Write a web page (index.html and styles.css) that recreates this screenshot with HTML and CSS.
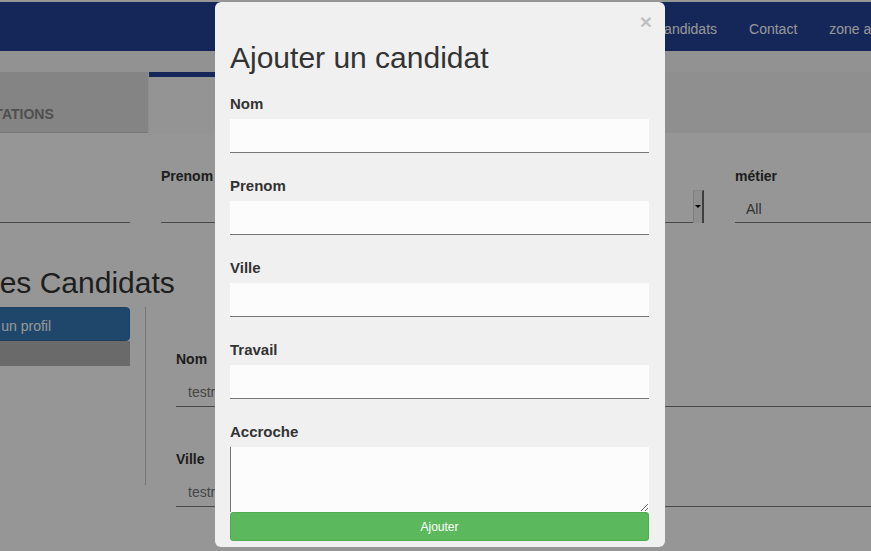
FILE: index.html
```html
<!DOCTYPE html>
<html lang="fr">
<head>
<meta charset="utf-8">
<title>Candidats</title>
<link rel="stylesheet" href="styles.css">
</head>
<body>
<div class="page">
  <nav class="navbar">
    <ul class="nav-links">
      <li><a href="#">Candidats</a></li>
      <li><a href="#">Contact</a></li>
      <li><a href="#">zone admin</a></li>
    </ul>
  </nav>
  <div class="subnav"></div>
  <div class="tabs">
    <div class="tab tab-inactive">PRESTATIONS</div>
    <div class="tab tab-active">CANDIDATS</div>
  </div>
  <main class="main">
    <div class="filters">
      <div class="filter">
        <label class="field-label">Nom</label>
        <input class="field-input" type="text">
      </div>
      <div class="filter">
        <label class="field-label">Prenom</label>
        <input class="field-input" type="text">
      </div>
      <div class="filter">
        <label class="field-label">Ville</label>
        <div class="select-wrap">
          <select class="field-select"><option></option></select>
          <span class="select-arrow"><span class="caret"></span></span>
        </div>
      </div>
      <div class="filter">
        <label class="field-label">métier</label>
        <select class="field-select field-select-full"><option>All</option></select>
      </div>
    </div>
    <h2 class="page-title">Les Candidats</h2>
    <div class="content">
      <aside class="sidebar">
        <button class="btn-primary" type="button">Ajouter un profil</button>
        <div class="sidebar-item"></div>
      </aside>
      <div class="divider"></div>
      <section class="detail">
        <div class="detail-group">
          <label class="field-label">Nom</label>
          <input class="detail-input" type="text" value="testr" readonly>
        </div>
        <div class="detail-group">
          <label class="field-label">Ville</label>
          <input class="detail-input" type="text" value="testr" readonly>
        </div>
      </section>
    </div>
  </main>
</div>

<div class="backdrop"></div>

<div class="modal">
  <button class="modal-close" type="button">×</button>
  <h3 class="modal-title">Ajouter un candidat</h3>
  <form class="modal-form">
    <div class="form-group">
      <label class="form-label">Nom</label>
      <input class="form-input" type="text">
    </div>
    <div class="form-group">
      <label class="form-label">Prenom</label>
      <input class="form-input" type="text">
    </div>
    <div class="form-group">
      <label class="form-label">Ville</label>
      <input class="form-input" type="text">
    </div>
    <div class="form-group">
      <label class="form-label">Travail</label>
      <input class="form-input" type="text">
    </div>
    <div class="form-group form-group-last">
      <label class="form-label">Accroche</label>
      <textarea class="form-textarea"></textarea>
    </div>
    <button class="btn-submit" type="button">Ajouter</button>
  </form>
</div>
</body>
</html>
```

FILE: styles.css
```css
html, body {
  margin: 0;
  height: 551px;
  overflow: hidden;
}

body {
  font-family: "Liberation Sans", Arial, sans-serif;
  background: #fff;
  color: #333;
}

.page {
  margin-left: -126px;
  width: 1300px;
  padding-top: 2px;
}

/* navbar */
.navbar {
  height: 49px;
  background: #254298;
  display: flex;
}

.nav-links {
  list-style: none;
  margin: 0 0 0 764px;
  padding: 0;
  display: flex;
}

.nav-links a {
  display: block;
  padding: 17px 16px 12px;
  font-size: 14px;
  line-height: 20px;
  color: #fff;
  text-decoration: none;
}

.subnav {
  height: 21px;
  background: #f9f9f9;
}

/* tabs */
.tabs {
  display: flex;
  gap: 1px;
  height: 61px;
  background: #f4f4f4;
}

.tab {
  width: 274px;
  box-sizing: border-box;
  padding-top: 32px;
  text-align: center;
  font-size: 14px;
  font-weight: bold;
  line-height: 20px;
  color: #868686;
}

.tab-inactive {
  background: #e1e1e1;
  border-bottom: 1px solid #cdcdcd;
  padding-right: 12px;
}

.tab-active {
  background: #fbfbfb;
  border-top: 5px solid #254298;
  padding-top: 27px;
}

/* filters */
.main {
  padding-top: 33px;
}

.filters {
  display: grid;
  grid-template-columns: repeat(4, 256px);
  column-gap: 31px;
}

.field-label {
  display: block;
  font-size: 14px;
  font-weight: bold;
  line-height: 20px;
  margin-bottom: 4px;
  color: #333;
}

.field-input,
.field-select {
  display: block;
  width: 100%;
  height: 33px;
  box-sizing: border-box;
  margin: 0;
  border: 0;
  border-bottom: 1px solid #7d7d7d;
  background: transparent;
  font-family: inherit;
  font-size: 14px;
  color: #555;
  padding: 5px 11px 0;
  -webkit-appearance: none;
  appearance: none;
  border-radius: 0;
}

.select-wrap {
  display: flex;
}

.select-wrap .field-select {
  flex: 1;
}

.select-arrow {
  width: 11px;
  height: 33px;
  box-sizing: border-box;
  background: #f4f4f4;
  border-left: 1px solid #d6d6d6;
  border-top: 1px solid #e6e6e6;
  border-right: 2px solid #6a6a6a;
  display: flex;
  justify-content: center;
  padding-top: 14px;
}

.caret {
  width: 0;
  height: 0;
  border-left: 3px solid transparent;
  border-right: 3px solid transparent;
  border-top: 3px solid #000;
}

.page-title {
  margin: 43px 0 8px 109px;
  font-size: 30px;
  line-height: 33px;
  font-weight: normal;
  color: #333;
}

/* content */
.content {
  display: grid;
  grid-template-columns: 256px 1px 1fr;
  column-gap: 15px;
  align-items: start;
}

.btn-primary {
  display: block;
  width: 100%;
  height: 34px;
  margin: 0;
  background: #337ab7;
  border: 1px solid #2e6da4;
  border-radius: 4px;
  color: #fff;
  font-family: inherit;
  font-size: 14px;
  line-height: 20px;
  padding: 8px 12px 4px;
}

.sidebar-item {
  height: 25px;
  background: #b5b5b5;
}

.divider {
  height: 178px;
  background: #cacaca;
}

.detail {
  padding: 42px 0 0 15px;
}

.detail-group {
  margin-bottom: 42px;
}

.detail-input {
  display: block;
  width: 100%;
  height: 34px;
  box-sizing: border-box;
  margin: 0;
  border: 0;
  border-bottom: 1px solid #7d7d7d;
  background: transparent;
  padding: 8px 12px 4px;
  font-family: inherit;
  font-size: 14px;
  color: #777;
}

/* backdrop */
.backdrop {
  position: fixed;
  inset: 0;
  background: rgba(0, 0, 0, 0.41);
}

/* modal */
.modal {
  position: absolute;
  left: 215px;
  top: 2px;
  width: 450px;
  height: 545px;
  box-sizing: border-box;
  padding: 39px 16px 6px 15px;
  background: #f0f0f0;
  border-radius: 6px;
}

.modal-close {
  position: absolute;
  top: 9px;
  right: 13px;
  padding: 0;
  border: 0;
  background: none;
  font-family: inherit;
  font-size: 21px;
  font-weight: bold;
  line-height: 1;
  color: #000;
  opacity: 0.2;
}

.modal-title {
  margin: 0 0 19px;
  font-size: 30px;
  line-height: 33px;
  font-weight: normal;
  color: #333;
}

.modal-form {
  margin: 0;
}

.form-group {
  margin-bottom: 22px;
}

.form-group-last {
  margin-bottom: 0;
}

.form-label {
  display: block;
  font-size: 15px;
  font-weight: bold;
  line-height: 21px;
  margin-bottom: 5px;
  color: #333;
}

.form-input {
  display: block;
  width: 100%;
  height: 34px;
  box-sizing: border-box;
  margin: 0;
  border: 0;
  border-bottom: 1px solid #777;
  background: #fcfcfc;
  padding: 6px 12px;
  font-family: inherit;
  font-size: 14px;
  border-radius: 0;
}

.form-textarea {
  display: block;
  width: 100%;
  height: 65px;
  box-sizing: border-box;
  margin: 0;
  border: 0;
  border-left: 1px solid #777;
  background: #fcfcfc;
  padding: 6px 12px;
  font-family: inherit;
  font-size: 14px;
  border-radius: 0;
}

.btn-submit {
  display: block;
  width: 100%;
  height: 29px;
  margin: 0;
  background: #5cb85c;
  border: 1px solid #4cae4c;
  border-radius: 3px;
  color: #fff;
  font-family: inherit;
  font-size: 12px;
  padding: 1px 0 0;
}
```
